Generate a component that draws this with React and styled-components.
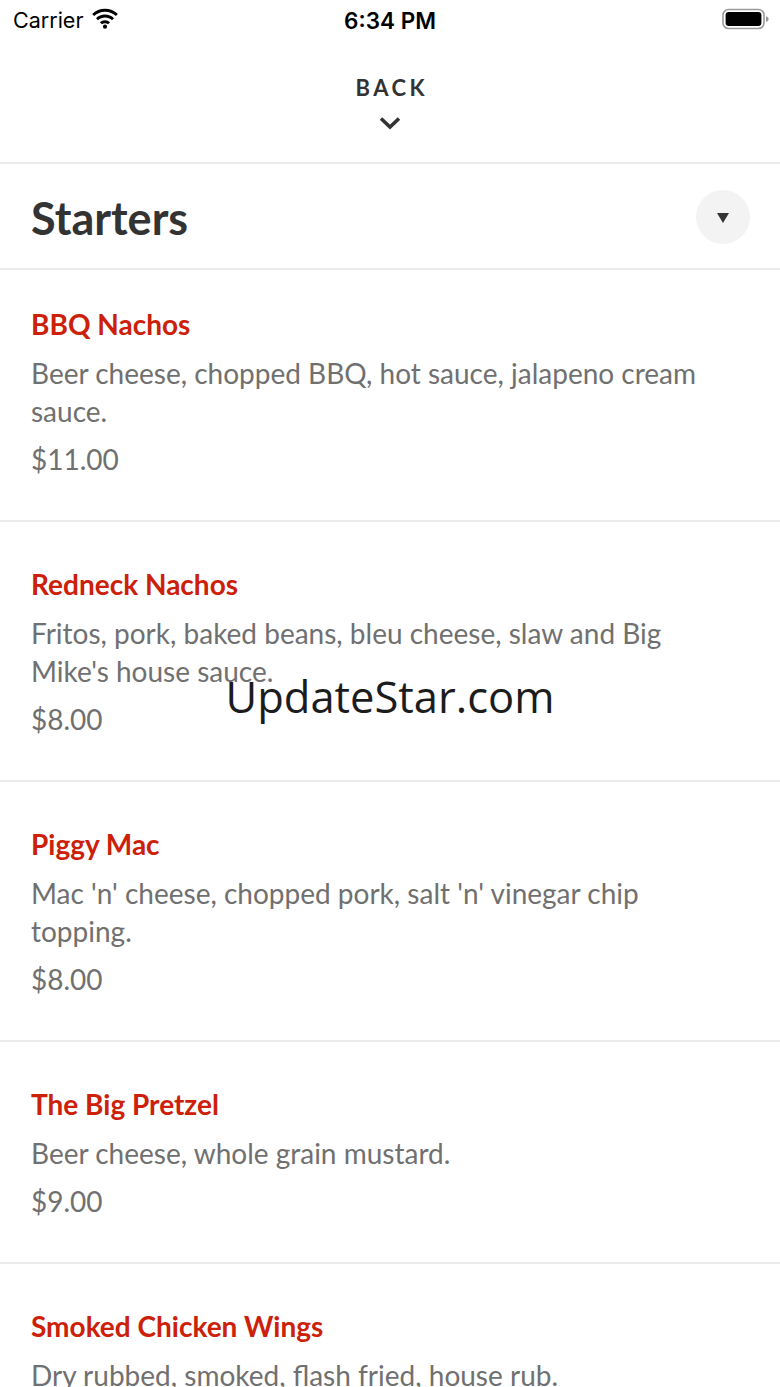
import styled, { createGlobalStyle } from "styled-components";

const GlobalStyle = createGlobalStyle`
  html, body {
    margin: 0;
    padding: 0;
    background: #ffffff;
  }
  body {
    font-family: Lato, "Liberation Sans", sans-serif;
  }
`;

const items = [
  {
    name: "BBQ Nachos",
    desc: "Beer cheese, chopped BBQ, hot sauce, jalapeno cream sauce.",
    price: "$11.00",
  },
  {
    name: "Redneck Nachos",
    desc: "Fritos, pork, baked beans, bleu cheese, slaw and Big Mike's house sauce.",
    price: "$8.00",
  },
  {
    name: "Piggy Mac",
    desc: "Mac 'n' cheese, chopped pork, salt 'n' vinegar chip topping.",
    price: "$8.00",
  },
  {
    name: "The Big Pretzel",
    desc: "Beer cheese, whole grain mustard.",
    price: "$9.00",
  },
  {
    name: "Smoked Chicken Wings",
    desc: "Dry rubbed, smoked, flash fried, house rub.",
    price: "$10.00",
  },
];

const App = () => {
  return (
    <>
      <GlobalStyle />
      <Screen>
        <StatusBar>
          <Carrier>
            Carrier
            <svg width="28" height="21" viewBox="0 0 24 18">
              <path
                d="M12 3.2c3.6 0 6.9 1.4 9.3 3.7l1.7-1.8C20.1 2.3 16.2.7 12 .7S3.9 2.3 1 5.1l1.7 1.8C5.1 4.6 8.4 3.2 12 3.2z"
                fill="#000"
              />
              <path
                d="M12 8.1c2.3 0 4.4.9 6 2.4l1.7-1.8C17.7 6.8 15 5.6 12 5.6S6.3 6.8 4.3 8.7L6 10.5c1.6-1.5 3.7-2.4 6-2.4z"
                fill="#000"
              />
              <path
                d="M12 13c1 0 1.9.4 2.6 1l1.8-1.8C15.2 11.1 13.7 10.5 12 10.5s-3.2.6-4.4 1.7L9.4 14c.7-.6 1.6-1 2.6-1z"
                fill="#000"
              />
              <circle cx="12" cy="16" r="1.8" fill="#000" />
            </svg>
          </Carrier>
          <Clock>6:34 PM</Clock>
          <Battery>
            <svg width="48" height="22" viewBox="0 0 48 22">
              <rect
                x="1"
                y="1.5"
                width="41"
                height="19"
                rx="5.5"
                fill="none"
                stroke="#9a9a9a"
                strokeWidth="1.6"
              />
              <rect x="3.6" y="4.1" width="35.8" height="13.8" rx="3.2" fill="#000" />
              <path d="M44 8.2c1.7.4 2.6 1.4 2.6 2.8s-.9 2.4-2.6 2.8z" fill="#9a9a9a" />
            </svg>
          </Battery>
        </StatusBar>

        <BackBar>
          <BackLabel>BACK</BackLabel>
          <svg width="24" height="16" viewBox="0 0 24 16">
            <path
              d="M3 3.5l9 8.5 9-8.5"
              fill="none"
              stroke="#333"
              strokeWidth="3.6"
            />
          </svg>
        </BackBar>

        <SectionHeader>
          <SectionTitle>Starters</SectionTitle>
          <ToggleButton aria-label="Toggle section">
            <Triangle />
          </ToggleButton>
        </SectionHeader>

        <ItemList>
          {items.map((item, i) => (
            <Item key={item.name} $first={i === 0}>
              <ItemName>{item.name}</ItemName>
              <ItemDesc>{item.desc}</ItemDesc>
              <ItemPrice>{item.price}</ItemPrice>
            </Item>
          ))}
        </ItemList>

        <Watermark>UpdateStar.com</Watermark>
      </Screen>
    </>
  );
};

const Screen = styled.div`
  position: relative;
  width: 780px;
  height: 1387px;
  overflow: hidden;
  background: #fff;
`;

const StatusBar = styled.div`
  height: 40px;
  display: flex;
  align-items: center;
  justify-content: space-between;
  padding: 0 10px 0 13px;
  font-family: Inter, Roboto, sans-serif;
  font-size: 21.5px;
  color: #000;
  position: relative;
`;

const Carrier = styled.div`
  display: flex;
  align-items: center;
  gap: 8px;

  svg {
    margin-top: -4px;
  }
`;

const Clock = styled.div`
  position: absolute;
  left: 0;
  right: 0;
  text-align: center;
  font-size: 22.5px;
  font-weight: 600;
  pointer-events: none;
`;

const Battery = styled.div`
  display: flex;
  align-items: center;
  margin-top: -2px;
`;

const BackBar = styled.div`
  height: 124px;
  display: flex;
  flex-direction: column;
  align-items: center;
  padding-top: 35px;
  box-sizing: border-box;
  border-bottom: 2px solid #ebebeb;
  gap: 14px;
`;

const BackLabel = styled.div`
  font-size: 22px;
  font-weight: 700;
  letter-spacing: 3.5px;
  color: #333;
  line-height: 26px;
  margin-right: -3.5px;
`;

const SectionHeader = styled.div`
  height: 106px;
  display: flex;
  align-items: center;
  justify-content: space-between;
  padding: 0 30px 0 31px;
  box-sizing: border-box;
  border-bottom: 2px solid #ebebeb;
`;

const SectionTitle = styled.h2`
  margin: 4px 0 0;
  font-size: 45px;
  font-weight: 700;
  color: #333;
  line-height: 52px;
`;

const ToggleButton = styled.button`
  width: 54px;
  height: 54px;
  border-radius: 50%;
  border: none;
  background: #f3f3f3;
  display: flex;
  align-items: center;
  justify-content: center;
  padding: 0;
  margin-top: 2px;
`;

const Triangle = styled.span`
  width: 0;
  height: 0;
  border-left: 6px solid transparent;
  border-right: 6px solid transparent;
  border-top: 10px solid #333;
  margin-top: 2px;
`;

const ItemList = styled.div`
  display: flex;
  flex-direction: column;
`;

const Item = styled.div`
  display: flex;
  flex-direction: column;
  padding: ${(p) => (p.$first ? "38px" : "46px")} 52px 42px 31px;
  border-bottom: 2px solid #ebebeb;
`;

const ItemName = styled.div`
  font-size: 28px;
  font-weight: 700;
  color: #cc2008;
  line-height: 32px;
`;

const ItemDesc = styled.div`
  margin-top: 14px;
  font-size: 28px;
  color: #707070;
  line-height: 38px;
`;

const ItemPrice = styled.div`
  margin-top: 10px;
  font-size: 28px;
  color: #707070;
  line-height: 38px;
`;

const Watermark = styled.div`
  position: absolute;
  left: 0;
  right: 0;
  top: 670px;
  text-align: center;
  font-family: "Open Sans", "Noto Sans", sans-serif;
  font-size: 43.5px;
  color: #1c1c1c;
  line-height: 54px;
  pointer-events: none;
`;

export default App;
